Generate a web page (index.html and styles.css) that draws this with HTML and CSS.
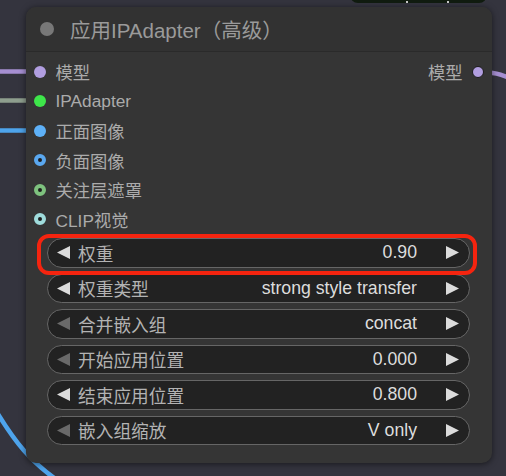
FILE: index.html
```html
<!DOCTYPE html>
<html>
<head>
<meta charset="utf-8">
<link rel="stylesheet" href="styles.css">
</head>
<body>
<div class="canvas">
  <svg class="links" width="506" height="476" viewBox="0 0 506 476">
    <path d="M0 71.5 L32 71.5" class="lk lk-purple"/>
    <path d="M0 100.5 L32 100.5" class="lk lk-grey"/>
    <path d="M0 130.5 L32 130.5" class="lk lk-blue"/>
    <path d="M478 72 C 494 72 500 74 512 79" class="lk lk-purple"/>
    <path d="M-2 414 C 14 440 30 462 60 482" class="lk lk-blue"/>
  </svg>
  <div class="topnode"><span class="tick t1"></span><span class="tick t2"></span></div>

  <div class="node">
    <div class="title">
      <span class="title-dot"></span>
      <span class="title-text">应用IPAdapter（高级）</span>
    </div>
    <div class="slots">
      <div class="slot-row">
        <div class="slot"><span class="dot d-model"></span><span>模型</span></div>
        <div class="slot out"><span>模型</span><span class="dot d-model d-out"></span></div>
      </div>
      <div class="slot-row"><div class="slot"><span class="dot d-ipa"></span><span>IPAdapter</span></div></div>
      <div class="slot-row"><div class="slot"><span class="dot d-pos"></span><span>正面图像</span></div></div>
      <div class="slot-row"><div class="slot"><span class="dot ring r-neg"></span><span>负面图像</span></div></div>
      <div class="slot-row"><div class="slot"><span class="dot ring r-mask"></span><span>关注层遮罩</span></div></div>
      <div class="slot-row"><div class="slot"><span class="dot ring r-clip"></span><span>CLIP视觉</span></div></div>
    </div>
    <div class="widgets">
      <div class="widget">
        <svg class="arr" width="13" height="13" viewBox="0 0 13 13"><path d="M0 6.5 L13 0 L13 13 Z" class="arr-on"/></svg>
        <span class="wlabel">权重</span><span class="wval">0.90</span>
        <svg class="arr arr-r" width="13" height="13" viewBox="0 0 13 13"><path d="M13 6.5 L0 0 L0 13 Z" class="arr-on"/></svg>
      </div>
      <div class="widget">
        <svg class="arr" width="13" height="13" viewBox="0 0 13 13"><path d="M0 6.5 L13 0 L13 13 Z" class="arr-on"/></svg>
        <span class="wlabel">权重类型</span><span class="wval">strong style transfer</span>
        <svg class="arr arr-r" width="13" height="13" viewBox="0 0 13 13"><path d="M13 6.5 L0 0 L0 13 Z" class="arr-on"/></svg>
      </div>
      <div class="widget">
        <svg class="arr" width="13" height="13" viewBox="0 0 13 13"><path d="M0 6.5 L13 0 L13 13 Z" class="arr-off"/></svg>
        <span class="wlabel">合并嵌入组</span><span class="wval">concat</span>
        <svg class="arr arr-r" width="13" height="13" viewBox="0 0 13 13"><path d="M13 6.5 L0 0 L0 13 Z" class="arr-on"/></svg>
      </div>
      <div class="widget">
        <svg class="arr" width="13" height="13" viewBox="0 0 13 13"><path d="M0 6.5 L13 0 L13 13 Z" class="arr-off"/></svg>
        <span class="wlabel">开始应用位置</span><span class="wval">0.000</span>
        <svg class="arr arr-r" width="13" height="13" viewBox="0 0 13 13"><path d="M13 6.5 L0 0 L0 13 Z" class="arr-on"/></svg>
      </div>
      <div class="widget">
        <svg class="arr" width="13" height="13" viewBox="0 0 13 13"><path d="M0 6.5 L13 0 L13 13 Z" class="arr-on"/></svg>
        <span class="wlabel">结束应用位置</span><span class="wval">0.800</span>
        <svg class="arr arr-r" width="13" height="13" viewBox="0 0 13 13"><path d="M13 6.5 L0 0 L0 13 Z" class="arr-on"/></svg>
      </div>
      <div class="widget">
        <svg class="arr" width="13" height="13" viewBox="0 0 13 13"><path d="M0 6.5 L13 0 L13 13 Z" class="arr-off"/></svg>
        <span class="wlabel">嵌入组缩放</span><span class="wval">V only</span>
        <svg class="arr arr-r" width="13" height="13" viewBox="0 0 13 13"><path d="M13 6.5 L0 0 L0 13 Z" class="arr-on"/></svg>
      </div>
    </div>
    <div class="highlight"></div>
  </div>
</div>
</body>
</html>
```

FILE: styles.css
```css
* { box-sizing: border-box; }
html, body { margin: 0; padding: 0; }
body {
  width: 506px;
  height: 476px;
  overflow: hidden;
  background: #34343e;
  font-family: "Liberation Sans", "Noto Sans CJK SC", Arial, sans-serif;
}
.canvas {
  position: relative;
  width: 506px;
  height: 476px;
  padding-top: 7px;
  padding-left: 26px;
}
.links {
  position: absolute;
  left: 0;
  top: 0;
  z-index: 0;
}
.lk { fill: none; stroke-width: 4.5; }
.lk-purple { stroke: #a68fd2; }
.lk-grey { stroke: #8e9e8e; }
.lk-blue { stroke: #4ea4ec; }

.topnode {
  position: absolute;
  left: 350px;
  top: -12px;
  width: 137px;
  height: 15px;
  background: #111c10;
  border-radius: 0 0 8px 8px;
}
.tick {
  position: absolute;
  bottom: 0;
  width: 2px;
  height: 2px;
  background: #c9c9c9;
}
.t1 { left: 56px; }
.t2 { left: 97px; }

.node {
  position: relative;
  z-index: 1;
  width: 466px;
  height: 456px;
  background: #353535;
  border-radius: 10px;
  box-shadow: 0 1px 6px rgba(0, 0, 0, 0.55);
}
.title {
  height: 45px;
  display: flex;
  align-items: center;
  padding-left: 14px;
  gap: 16px;
  background: #323232;
  border-radius: 10px 10px 0 0;
  border-bottom: 1px solid #2a2a2a;
}
.title-dot {
  width: 14px;
  height: 14px;
  border-radius: 50%;
  background: #787878;
}
.title-text {
  color: #9a9a9a;
  font-size: 20.5px;
}
.slots {
  padding-top: 5px;
}
.slot-row {
  height: 29.5px;
  display: flex;
  align-items: center;
  justify-content: space-between;
  padding: 0 8px;
}
.slot {
  display: flex;
  align-items: center;
  gap: 9.5px;
  color: #ababab;
  font-size: 17.3px;
}
.dot {
  width: 12px;
  height: 12px;
  border-radius: 50%;
  flex: none;
}
.d-model { background: #b19ee0; }
.d-out { border: 1.5px solid #1b1b1b; }
.d-ipa { background: #3ee64a; }
.d-pos { background: #5eb1f8; }
.ring { background: #1e1e1e; border: 4.2px solid; }
.r-neg { border-color: #5aa8f0; }
.r-mask { border-color: #7ec27e; }
.r-clip { border-color: #9fdcdc; }

.widgets {
  margin-top: 4px;
  padding: 0 22.5px 0 21px;
  display: flex;
  flex-direction: column;
  gap: 6px;
}
.widget {
  height: 29.5px;
  display: flex;
  align-items: center;
  background: #222222;
  border: 1px solid #666666;
  border-radius: 15px;
  padding: 0 9.5px 0 9px;
  font-size: 17.7px;
}
.arr { flex: none; }
.arr-on { fill: #dcdcdc; }
.arr-off { fill: #6a6a6a; }
.wlabel {
  flex: 1;
  margin-left: 8px;
  color: #b3b3b3;
  white-space: nowrap;
}
.wval {
  color: #dddddd;
  margin-right: 29px;
  white-space: nowrap;
}
.highlight {
  position: absolute;
  left: 11px;
  top: 227px;
  width: 440px;
  height: 40.5px;
  border: 4.5px solid #f5240f;
  border-radius: 12px;
  pointer-events: none;
}
```
